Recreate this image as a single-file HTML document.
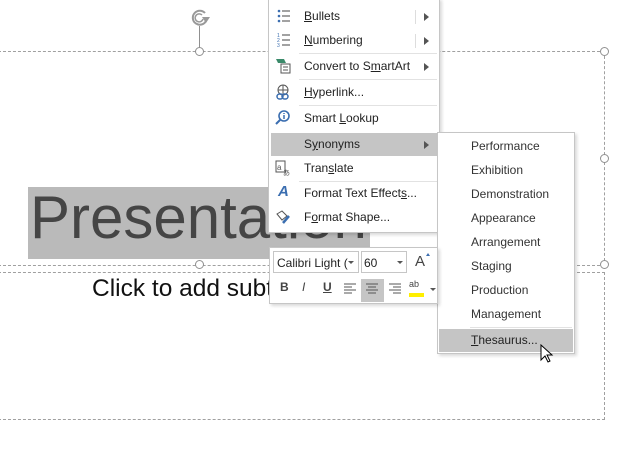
<!DOCTYPE html>
<html><head><style>
body{margin:0;width:638px;height:473px;background:#fff;position:relative;overflow:hidden;font-family:"Segoe UI","Liberation Sans",sans-serif;}
.a{position:absolute}
.hd{position:absolute;width:7px;height:7px;border:1.3px solid #909090;border-radius:50%;background:#fff}
.mi{position:absolute;left:35px;font-size:12px;color:#222}
.si{position:absolute;left:33px;font-size:12px;color:#333}
.sep{position:absolute;left:30px;right:2px;height:1px;background:#e2e2e2}
</style></head><body>
<div class="a" style="left:-2px;top:51px;width:606px;height:213px;border:1px dashed #a0a0a0;border-left:none"></div>
<div class="a" style="left:-2px;top:272px;width:606px;height:146px;border:1px dashed #a0a0a0;border-left:none"></div>
<div class="a" style="left:199px;top:26px;width:1px;height:22px;background:#909090"></div>
<svg class="a" style="left:189px;top:7px" width="24" height="22" viewBox="0 0 24 22"><path d="M16 6 A7 7 0 1 0 17 14" fill="none" stroke="#999" stroke-width="2"/><path d="M13 8 A4 4 0 1 0 14 12" fill="none" stroke="#999" stroke-width="1.5"/><path d="M13 10 L21 10 L17 16 Z" fill="#999"/></svg>
<div class="hd" style="left:195px;top:47px"></div>
<div class="hd" style="left:600px;top:47px"></div>
<div class="hd" style="left:195px;top:260px"></div>
<div class="hd" style="left:600px;top:260px"></div>
<div class="hd" style="left:600px;top:154px"></div>
<div class="a" style="left:28px;top:187px;width:342px;height:72px;background:#bababa"></div>
<div class="a" style="left:30px;top:178px;font-family:'Liberation Sans',sans-serif;font-size:60px;color:#454545;letter-spacing:0px;line-height:80px">Presentation</div>
<div class="a" style="left:92px;top:275px;font-family:'Liberation Sans',sans-serif;font-size:24.5px;color:#111">Click to add subtitle</div>
<div class="a" style="left:268px;top:-2px;width:170px;height:233px;background:#fff;border:1px solid #c6c6c6;box-shadow:2px 2px 3px rgba(0,0,0,.15)">
 <div class="mi" style="top:10px"><u>B</u>ullets</div><div class="a" style="left:155px;top:14px;border-left:5px solid #555;border-top:4px solid transparent;border-bottom:4px solid transparent"></div>
 <div class="a" style="left:146px;top:11px;width:1px;height:14px;background:#ddd"></div>
 <svg class="a" style="left:8px;top:10px" width="14" height="14"><g fill="#3b6eb0"><circle cx="2" cy="2" r="1.3"/><circle cx="2" cy="7" r="1.3"/><circle cx="2" cy="12" r="1.3"/></g><g stroke="#444"><path d="M5 2h8M5 7h8M5 12h8"/></g></svg>
 <div class="mi" style="top:34px"><u>N</u>umbering</div><div class="a" style="left:155px;top:38px;border-left:5px solid #555;border-top:4px solid transparent;border-bottom:4px solid transparent"></div>
 <div class="a" style="left:146px;top:35px;width:1px;height:14px;background:#ddd"></div>
 <svg class="a" style="left:8px;top:34px" width="14" height="14"><g fill="#3b6eb0" font-size="5" font-family="Liberation Sans"><text x="0" y="4">1</text><text x="0" y="9">2</text><text x="0" y="14">3</text></g><g stroke="#444"><path d="M5 2h8M5 7h8M5 12h8"/></g></svg>
 <div class="sep" style="top:54px"></div>
 <div class="mi" style="top:60px">Convert to S<u>m</u>artArt</div><div class="a" style="left:155px;top:64px;border-left:5px solid #555;border-top:4px solid transparent;border-bottom:4px solid transparent"></div>
 <svg class="a" style="left:6px;top:59px" width="16" height="16"><path d="M1 1h8l2 4H3z" fill="#3a8a6a"/><rect x="6" y="6" width="9" height="9" fill="#fff" stroke="#555"/><path d="M8 9h5M8 12h5" stroke="#555"/></svg>
 <div class="sep" style="top:80px"></div>
 <div class="mi" style="top:86px"><u>H</u>yperlink...</div>
 <svg class="a" style="left:6px;top:85px" width="16" height="16"><circle cx="8" cy="6" r="5" fill="none" stroke="#555"/><path d="M3 6h10M8 1v10" stroke="#555"/><rect x="2" y="10" width="6" height="5" rx="2.5" fill="none" stroke="#3b6eb0" stroke-width="1.5"/><rect x="7" y="10" width="6" height="5" rx="2.5" fill="none" stroke="#3b6eb0" stroke-width="1.5"/></svg>
 <div class="sep" style="top:106px"></div>
 <div class="mi" style="top:112px">Smart <u>L</u>ookup</div>
 <svg class="a" style="left:6px;top:111px" width="16" height="16"><circle cx="9" cy="6" r="5" fill="none" stroke="#3b6eb0" stroke-width="1.6"/><path d="M5 10L1 14" stroke="#3b6eb0" stroke-width="2"/><path d="M9 5v4M9 3v1" stroke="#3b6eb0" stroke-width="1.5"/></svg>
 <div class="a" style="left:2px;top:134px;width:166px;height:23px;background:#c5c5c5"></div>
 <div class="mi" style="top:138px">S<u>y</u>nonyms</div><div class="a" style="left:155px;top:142px;border-left:5px solid #555;border-top:4px solid transparent;border-bottom:4px solid transparent"></div>
 <div class="mi" style="top:162px">Tran<u>s</u>late</div>
 <svg class="a" style="left:6px;top:161px" width="16" height="16"><rect x="1" y="1" width="9" height="11" fill="none" stroke="#555"/><text x="2" y="10" font-size="8" fill="#555" font-family="Liberation Sans">a</text><text x="8" y="15" font-size="7" fill="#555" font-family="Liberation Sans">あ</text></svg>
 <div class="sep" style="top:182px"></div>
 <div class="mi" style="top:187px">Format Text Effect<u>s</u>...</div>
 <div class="a" style="left:9px;top:184px;font:italic bold 15px 'Liberation Sans';color:#3b6eb0">A</div>
 <div class="mi" style="top:211px">F<u>o</u>rmat Shape...</div>
 <svg class="a" style="left:6px;top:210px" width="16" height="16"><path d="M2 5l5-3 5 5-5 4z" fill="none" stroke="#555"/><path d="M8 14l6-7" stroke="#3b6eb0" stroke-width="2.5"/></svg>
</div>
<div class="a" style="left:437px;top:132px;width:136px;height:220px;background:#fff;border:1px solid #c6c6c6;box-shadow:2px 2px 3px rgba(0,0,0,.15)">
 <div class="si" style="top:6px">Performance</div>
 <div class="si" style="top:30px">Exhibition</div>
 <div class="si" style="top:54px">Demonstration</div>
 <div class="si" style="top:78px">Appearance</div>
 <div class="si" style="top:102px">Arrangement</div>
 <div class="si" style="top:126px">Staging</div>
 <div class="si" style="top:150px">Production</div>
 <div class="si" style="top:174px">Management</div>
 <div class="a" style="left:32px;right:2px;top:194px;height:1px;background:#e2e2e2"></div>
 <div class="a" style="left:1px;top:196px;width:134px;height:23px;background:#c5c5c5"></div>
 <div class="si" style="top:200px;color:#222"><u>T</u>hesaurus...</div>
</div>
<div class="a" style="left:269px;top:247px;width:167px;height:55px;background:#fff;border:1px solid #c6c6c6;box-shadow:2px 2px 3px rgba(0,0,0,.15)">
 <div class="a" style="left:3px;top:3px;width:86px;height:22px;border:1px solid #c6c6c6;font-size:12px;line-height:22px;padding-left:3px;color:#222;box-sizing:border-box">Calibri Light (</div>
 <div class="a" style="left:78px;top:13px;border-top:3px solid #555;border-left:3px solid transparent;border-right:3px solid transparent"></div>
 <div class="a" style="left:91px;top:3px;width:46px;height:22px;border:1px solid #c6c6c6;font-size:12px;line-height:22px;padding-left:2px;color:#222;box-sizing:border-box">60</div>
 <div class="a" style="left:127px;top:13px;border-top:3px solid #555;border-left:3px solid transparent;border-right:3px solid transparent"></div>
 <div class="a" style="left:145px;top:5px;font:15px 'Liberation Sans';color:#444">A</div>
 <div class="a" style="left:156px;top:5px;border-bottom:3px solid #3b6eb0;border-left:2px solid transparent;border-right:2px solid transparent"></div>
 <div class="a" style="left:91px;top:31px;width:23px;height:23px;background:#c5c5c5"></div>
 <div class="a" style="left:10px;top:32px;font:bold 12px 'Liberation Sans';color:#444">B</div>
 <div class="a" style="left:32px;top:32px;font:italic 12px 'Liberation Sans';color:#444">I</div>
 <div class="a" style="left:53px;top:32px;font:bold 12px 'Liberation Sans';color:#444;text-decoration:underline">U</div>
 <svg class="a" style="left:73px;top:34px" width="110" height="14"><g stroke="#555"><path d="M1 2h12M1 5h8M1 8h12M1 11h8"/><path d="M23 2h12M25 5h8M23 8h12M25 11h8"/><path d="M46 2h12M50 5h8M46 8h12M50 11h8"/></g></svg>
 <div class="a" style="left:139px;top:31px;font:9px 'Liberation Sans';color:#444">ab</div>
 <div class="a" style="left:139px;top:45px;width:15px;height:4px;background:#ffef00"></div>
 <div class="a" style="left:160px;top:40px;border-top:3px solid #555;border-left:3px solid transparent;border-right:3px solid transparent"></div>
</div>
<svg class="a" style="left:540px;top:344px" width="14" height="20"><path d="M1 1v15l4-4 3 6 2-1-3-6h5z" fill="#fff" stroke="#000"/></svg>
</body></html>
